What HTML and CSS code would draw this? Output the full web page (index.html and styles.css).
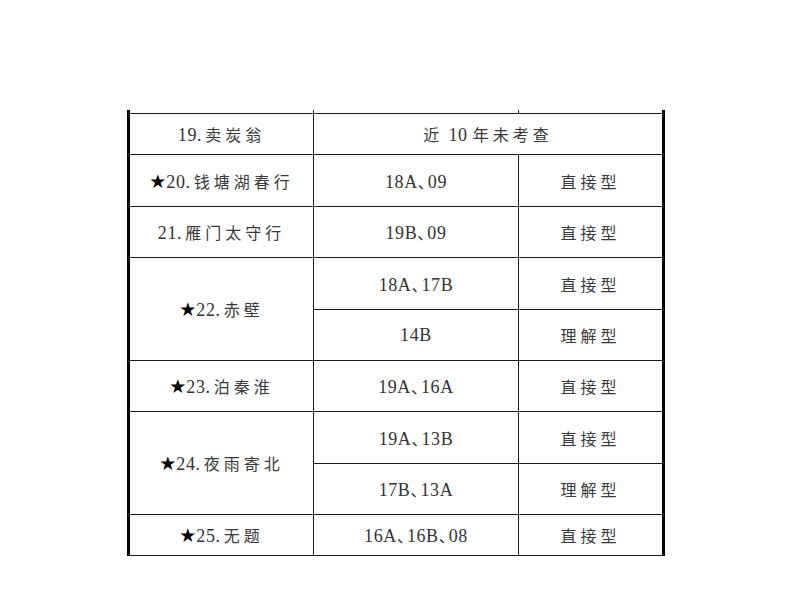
FILE: index.html
```html
<!DOCTYPE html>
<html lang="zh">
<head>
<meta charset="utf-8">
<link rel="stylesheet" href="styles.css">
</head>
<body>
<div class="page">
<table class="grid">
  <colgroup><col class="c1"><col class="c2"><col class="c3"></colgroup>
  <tr class="stub"><td></td><td></td><td></td></tr>
  <tr class="r-short"><td>19.<span class="cn lead">卖炭翁</span></td><td colspan="2"><span class="cn">近</span> 10 <span class="cn">年未考查</span></td></tr>
  <tr class="r-a"><td><span class="star">★</span>20.<span class="cn lead">钱塘湖春行</span></td><td>18A<span class="sep">、</span>09</td><td class="cn">直接型</td></tr>
  <tr class="r-b"><td>21.<span class="cn lead">雁门太守行</span></td><td>19B<span class="sep">、</span>09</td><td class="cn">直接型</td></tr>
  <tr class="r-a"><td rowspan="2"><span class="star">★</span>22.<span class="cn lead">赤壁</span></td><td>18A<span class="sep">、</span>17B</td><td class="cn">直接型</td></tr>
  <tr class="r-b"><td>14B</td><td class="cn">理解型</td></tr>
  <tr class="r-b"><td><span class="star">★</span>23.<span class="cn lead">泊秦淮</span></td><td>19A<span class="sep">、</span>16A</td><td class="cn">直接型</td></tr>
  <tr class="r-a"><td rowspan="2"><span class="star">★</span>24.<span class="cn lead">夜雨寄北</span></td><td>19A<span class="sep">、</span>13B</td><td class="cn">直接型</td></tr>
  <tr class="r-b"><td>17B<span class="sep">、</span>13A</td><td class="cn">理解型</td></tr>
  <tr class="r-short"><td><span class="star">★</span>25.<span class="cn lead">无题</span></td><td>16A<span class="sep">、</span>16B<span class="sep">、</span>08</td><td class="cn">直接型</td></tr>
</table>
</div>
</body>
</html>
```
FILE: styles.css
```css
html, body {
  margin: 0;
  padding: 0;
  background: #fff;
}
.page {
  padding: 110px 0 0 127px;
}
.grid {
  border-collapse: collapse;
  table-layout: fixed;
  width: 535px;
  border-left: 3px solid #000;
  border-right: 3px solid #000;
  font-family: "Liberation Serif", "Noto Sans CJK SC", serif;
  font-size: 18px;
  color: #333;
}
.c1 { width: 185px; }
.c2 { width: 205px; }
.c3 { width: 145px; }
.grid td {
  border: 1px solid #1a1a1a;
  text-align: center;
  vertical-align: middle;
  padding: 0;
  white-space: nowrap;
  letter-spacing: 0.6px;
}
.grid tr.stub td {
  border-top: none;
  height: 3px;
}
.grid tr.r-short td { height: 40px; }
.grid tr.r-a td { height: 51px; }
.grid tr.r-b td { height: 50px; }
.cn, .grid td.cn {
  font-family: "Noto Sans CJK SC", sans-serif;
  font-size: 16px;
  letter-spacing: 4px;
  color: #3a3a3a;
}
.lead {
  margin-left: 3px;
}
.sep {
  font-family: "Noto Sans CJK SC", sans-serif;
  font-size: 16px;
  letter-spacing: -6px;
}
.star {
  font-family: "DejaVu Sans", sans-serif;
  color: #000;
  font-size: 19px;
  letter-spacing: 0;
}
```
